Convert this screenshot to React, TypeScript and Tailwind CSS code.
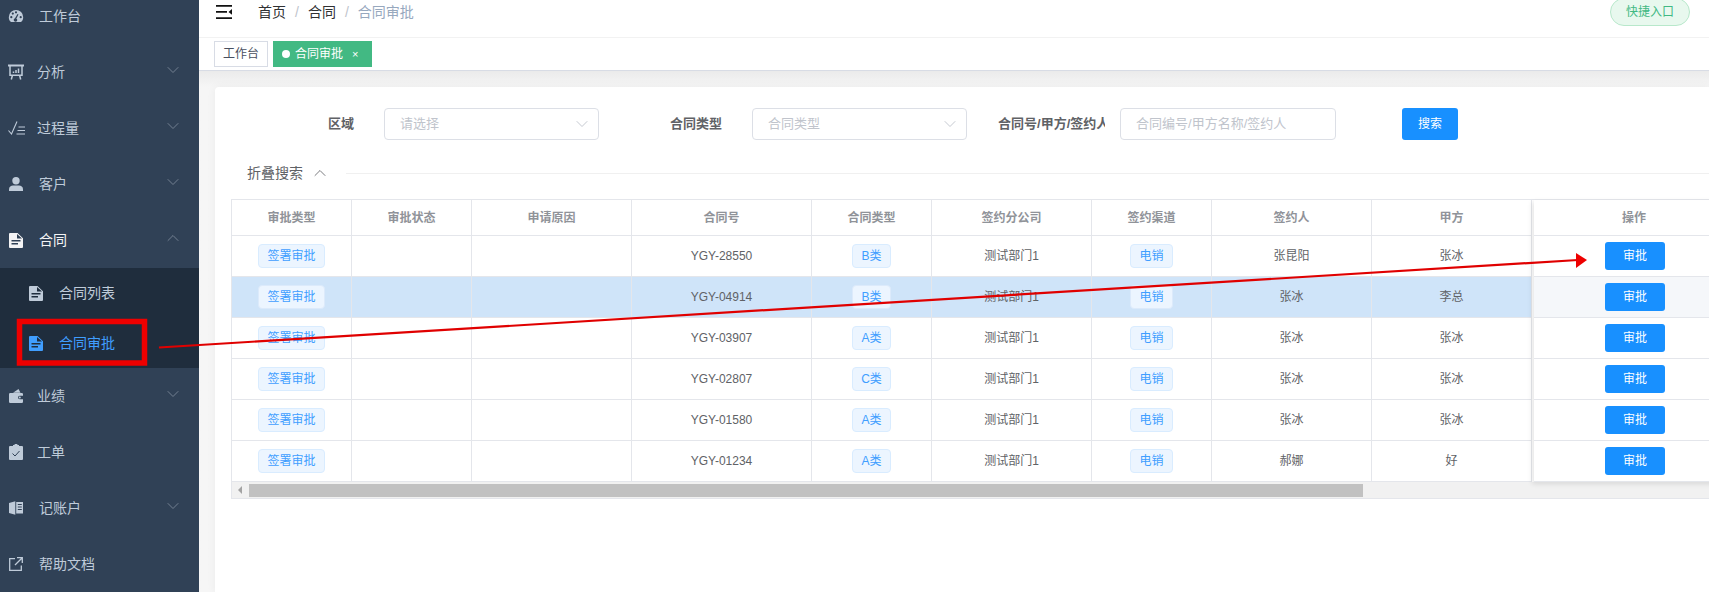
import React from 'react';
import { ChevronDown, ChevronUp } from 'lucide-react';

type IconProps = { className?: string };

const GaugeIcon = ({ className }: IconProps) => (
  <svg viewBox="0 0 16 14" className={className} fill="currentColor">
    <path fillRule="evenodd" d="M8 1a7.2 7.2 0 0 0-7.2 7.2c0 1.700.6 3.200 1.600 4.400a1 1 0 0 0 .8.400h9.600a1 1 0 0 0 .8-.400c1-1.200 1.600-2.700 1.600-4.400A7.200 7.200 0 0 0 8 1ZM3.300 9.300a1.100 1.100 0 1 1 0-2.200 1.100 1.100 0 0 1 0 2.200Zm1.500-3.600a1.100 1.100 0 1 1 0-2.200 1.100 1.100 0 0 1 0 2.200Zm3.200-1.300a1.100 1.100 0 1 1 0-2.200 1.100 1.100 0 0 1 0 2.200Zm1.300 6.600a1.800 1.800 0 1 1-2.300-1.800l2.500-4.300 1 .6-2.200 4.200c.6.200 1 .7 1 1.300Zm3.400-1.700a1.100 1.100 0 1 1 0-2.200 1.100 1.100 0 0 1 0 2.200Z" />
  </svg>
);

const BoardIcon = ({ className }: IconProps) => (
  <svg viewBox="0 0 16 16" className={className} fill="none" stroke="currentColor">
    <path strokeWidth="2" d="M0 1.500h16" />
    <path strokeWidth="1.500" d="M2 2v9.200h12V2M4.500 11l-1.200 4.500M11.500 11l1.200 4.500" />
    <path strokeWidth="1.500" d="M5.500 9V7.500M8 9V6M10.500 9V4.500" />
  </svg>
);

const CheckListIcon = ({ className }: IconProps) => (
  <svg viewBox="0 0 17 14" className={className} fill="none" stroke="currentColor" strokeWidth="1.100">
    <path d="M.5 9.500 3.500 13 9 .5M10.500 6h6.500M9.500 9.500H17M8.500 13H17" />
  </svg>
);

const UserIcon = ({ className }: IconProps) => (
  <svg viewBox="0 0 16 16" className={className} fill="currentColor">
    <circle cx="8" cy="4.700" r="3.700" />
    <path d="M1 15v-1.800C1 10.800 3 9.500 5 9.500h6c2 0 4 1.300 4 3.700V15Z" />
  </svg>
);

const FileIcon = ({ className }: IconProps) => (
  <svg viewBox="0 0 14 15" className={className} fill="currentColor">
    <path fillRule="evenodd" d="M1 0h7.500L14 5.200V14a1 1 0 0 1-1 1H1a1 1 0 0 1-1-1V1a1 1 0 0 1 1-1Zm1.500 7v1.500h9V7Zm0 3v1.500h6.500V10ZM8 1v4.500h5Z" />
  </svg>
);

const WalletIcon = ({ className }: IconProps) => (
  <svg viewBox="0 0 14 14" className={className} fill="currentColor">
    <path d="M4 3.800 9.500 0l2 3.800Z" />
    <path fillRule="evenodd" d="M0 5.200a1.200 1.200 0 0 1 1.200-1.200h11.600A1.200 1.200 0 0 1 14 5.200v1.600h-3.300a1.700 1.700 0 0 0 0 3.400H14v2.600a1.200 1.200 0 0 1-1.200 1.200H1.200A1.200 1.200 0 0 1 0 12.800Z" />
    <circle cx="10.800" cy="8.500" r="1" />
  </svg>
);

const ClipboardIcon = ({ className }: IconProps) => (
  <svg viewBox="0 0 14 16" className={className}>
    <path fill="currentColor" d="M1 2h3V1h1.500a1.500 1.500 0 0 1 3 0H10v1h3a1 1 0 0 1 1 1v12a1 1 0 0 1-1 1H1a1 1 0 0 1-1-1V3a1 1 0 0 1 1-1Z" />
    <path fill="none" stroke="#304156" strokeWidth="1" d="M3.500 9.500 6 12l4.500-5" />
  </svg>
);

const BookIcon = ({ className }: IconProps) => (
  <svg viewBox="0 0 14 14" className={className} fill="currentColor">
    <path d="M0 2 6.300.3v13.400L0 12Z" />
    <path fillRule="evenodd" d="M7.200 1H14v11.500H7.200Zm1.600 2v1h4V3Zm0 2.500v1h4v-1Zm0 2.500v1h4V8Z" />
  </svg>
);

const LinkIcon = ({ className }: IconProps) => (
  <svg viewBox="0 0 14 14" className={className} fill="none" stroke="currentColor" strokeWidth="1.300">
    <path d="M6 1.700H.7v11.600h11.600V8.500M8 .7h5.300V6M13.300.7 6 8" />
  </svg>
);

const menuTop = [
  { label: '工作台', icon: GaugeIcon, size: 'w-[16px] h-[14px]', gap: 'ml-[15px]' },
  { label: '分析', icon: BoardIcon, size: 'w-[16px] h-[16px]', gap: 'ml-[13px]', arrow: true },
  { label: '过程量', icon: CheckListIcon, size: 'w-[17px] h-[14px] shrink-0', gap: 'ml-[13px]', arrow: true },
  { label: '客户', icon: UserIcon, size: 'w-[16px] h-[16px]', gap: 'ml-[15px]', arrow: true },
];

const menuBottom = [
  { label: '业绩', icon: WalletIcon, size: 'w-[14px] h-[14px]', gap: 'ml-[13px]', arrow: true },
  { label: '工单', icon: ClipboardIcon, size: 'w-[14px] h-[16px]', gap: 'ml-[13px]' },
  { label: '记账户', icon: BookIcon, size: 'w-[14px] h-[14px]', gap: 'ml-[15px]', arrow: true },
  { label: '帮助文档', icon: LinkIcon, size: 'w-[14px] h-[14px]', gap: 'ml-[15px]' },
];

const rows = [
  { no: 'YGY-28550', kind: 'B类', signer: '张昆阳', party: '张冰' },
  { no: 'YGY-04914', kind: 'B类', signer: '张冰', party: '李总' },
  { no: 'YGY-03907', kind: 'A类', signer: '张冰', party: '张冰' },
  { no: 'YGY-02807', kind: 'C类', signer: '张冰', party: '张冰' },
  { no: 'YGY-01580', kind: 'A类', signer: '张冰', party: '张冰' },
  { no: 'YGY-01234', kind: 'A类', signer: '郝娜', party: '好' },
];

const headers = ['审批类型', '审批状态', '申请原因', '合同号', '合同类型', '签约分公司', '签约渠道', '签约人', '甲方'];

const colsClass = 'grid grid-cols-[120px_120px_160px_180px_120px_160px_120px_160px_160px]';
const cellClass = 'flex items-center justify-center border-r border-[#e4e6eb]';

function MenuItem({ item }: { item: (typeof menuTop)[number] }) {
  const Icon = item.icon;
  return (
    <div className="flex h-[56px] items-center pl-[8px] pr-[16px] text-sm text-[#bfcbd9]">
      <span className="flex w-[16px] justify-center">
        <Icon className={item.size} />
      </span>
      <span className={item.gap}>{item.label}</span>
      {item.arrow && <ChevronDown className="ml-auto h-[20px] w-[20px] -translate-y-0.5 text-[#7f8c9c]" strokeWidth={1} />}
    </div>
  );
}

function Tag({ text, hot }: { text: string; hot: boolean }) {
  return (
    <span className={`inline-flex h-[24px] items-center rounded-[4px] border bg-[#ecf5ff] px-[8px] text-xs text-[#409eff] ${hot ? 'border-[#dceafb]' : 'border-[#d9ecff]'}`}>
      {text}
    </span>
  );
}

function SelectBox({ placeholder }: { placeholder: string }) {
  return (
    <div className="flex h-[32px] w-[215px] items-center rounded-[4px] border border-[#dcdfe6] pl-[15px] pr-[6px] text-[13px] text-[#c0c4cc]">
      <span>{placeholder}</span>
      <ChevronDown className="ml-auto h-[20px] w-[20px] text-[#c0c4cc]" strokeWidth={1.100} />
    </div>
  );
}

export default function App() {
  return (
    <div className="relative flex h-[592px] w-[1709px] overflow-hidden bg-white [font-family:'Liberation_Sans','Noto_Sans_CJK_SC',sans-serif]">
      <aside className="flex w-[199px] shrink-0 flex-col bg-[#304156]">
        <div className="-mt-[12px]">
          {menuTop.map(m => <MenuItem key={m.label} item={m} />)}
          <div className="flex h-[56px] items-center pl-[8px] pr-[16px] text-sm text-[#f4f4f5]">
            <span className="flex w-[16px] justify-center"><FileIcon className="h-[15px] w-[14px]" /></span>
            <span className="ml-[15px]">合同</span>
            <ChevronUp className="ml-auto h-[20px] w-[20px] -translate-y-0.5 text-[#7f8c9c]" strokeWidth={1} />
          </div>
          <div className="bg-[#1f2d3d] text-sm">
            <div className="flex h-[50px] items-center pl-[29px] text-[#bfcbd9]">
              <FileIcon className="h-[15px] w-[14px]" />
              <span className="ml-[16px]">合同列表</span>
            </div>
            <div className="flex h-[50px] items-center pl-[29px] text-[#409eff]">
              <FileIcon className="h-[15px] w-[14px]" />
              <span className="ml-[16px]">合同审批</span>
            </div>
          </div>
          {menuBottom.map(m => <MenuItem key={m.label} item={m} />)}
        </div>
      </aside>

      <main className="flex min-w-0 flex-1 flex-col">
        <header className="flex h-[38px] shrink-0 items-center border-b border-[#f2f2f2] pb-[13px] pl-[17px] pr-[19px]">
          <svg viewBox="0 0 16 14" className="h-[14px] w-[16px] text-[#111]" fill="currentColor">
            <path d="M0 0h16v1.800H0ZM0 6h11v1.800H0ZM0 12.200h16V14H0ZM16 4v5.800l-3.500-2.900Z" />
          </svg>
          <nav className="ml-[26px] flex items-center text-sm">
            <span className="text-[#303133]">首页</span>
            <span className="mx-[9px] text-[#c0c4cc]">/</span>
            <span className="text-[#303133]">合同</span>
            <span className="mx-[9px] text-[#c0c4cc]">/</span>
            <span className="text-[#97a8be]">合同审批</span>
          </nav>
          <div className="ml-auto flex h-[28px] w-[80px] items-center justify-center rounded-full border border-[#b8e8cb] bg-[#e8f8ee] text-xs text-[#42b983]">
            快捷入口
          </div>
        </header>

        <div className="flex h-[33px] shrink-0 items-center gap-[5px] border-b border-[#d8dce5] pl-[15px]">
          <div className="flex h-[26px] w-[54px] items-center justify-center border border-[#d8dce5] text-xs text-[#495060]">工作台</div>
          <div className="flex h-[26px] w-[99px] items-center bg-[#42b983] pl-[9px] text-xs text-white">
            <span className="h-[8px] w-[8px] rounded-full bg-white" />
            <span className="ml-[5px]">合同审批</span>
            <span className="ml-[9px] text-[11px] leading-none">×</span>
          </div>
        </div>

        <div className="min-h-0 flex-1 bg-[#f5f5f5] bg-linear-to-b from-[#ebebeb] to-[#f6f6f6] to-[16px] pl-[16px] pt-[16px]">
          <section className="h-full rounded-tl-[4px] bg-white pl-[16px] pt-[21px] shadow-[0_0_10px_rgba(0,0,0,0.05)]">
            <div className="flex items-center text-[13px] text-[#606266]">
              <label className="ml-[97px] font-bold">区域</label>
              <div className="ml-[30px]"><SelectBox placeholder="请选择" /></div>
              <label className="ml-[71px] font-bold">合同类型</label>
              <div className="ml-[30px]"><SelectBox placeholder="合同类型" /></div>
              <label className="ml-[31px] w-[107px] overflow-hidden whitespace-nowrap font-bold">合同号/甲方/签约人</label>
              <div className="ml-[15px] flex h-[32px] w-[216px] items-center rounded-[4px] border border-[#dcdfe6] pl-[15px] text-[13px] text-[#c0c4cc]">合同编号/甲方名称/签约人</div>
              <button className="ml-[66px] h-[32px] w-[56px] rounded-[3px] bg-[#1890ff] text-xs text-white">搜索</button>
            </div>

            <div className="mt-[23px] flex h-[20px] items-center text-sm text-[#606266]">
              <span className="ml-[16px]">折叠搜索</span>
              <ChevronUp className="ml-[7px] h-[20px] w-[20px] text-[#606266]" strokeWidth={1} />
              <span className="ml-[16px] h-px flex-1 bg-[#f0f0f0]" />
            </div>

            <div className="relative mt-[16px] border-b border-[#e4e6eb] border-l text-xs text-[#606266]">
              <div className="flex border-t border-[#e4e6eb]">
                <div className="w-[1300px] shrink-0">
                  <div className={`${colsClass} h-[36px] border-b border-[#e4e6eb] font-bold text-[#909399]`}>
                    {headers.map(h => <div key={h} className={cellClass}>{h}</div>)}
                  </div>
                  {rows.map((r, i) => (
                    <div key={r.no} className={`${colsClass} h-[41px] border-b border-[#e4e6eb] ${i === 1 ? 'bg-[#cfe4f9]' : ''}`}>
                      <div className={cellClass}><Tag text="签署审批" hot={i === 1} /></div>
                      <div className={cellClass} />
                      <div className={cellClass} />
                      <div className={cellClass}>{r.no}</div>
                      <div className={cellClass}><Tag text={r.kind} hot={i === 1} /></div>
                      <div className={cellClass}>测试部门1</div>
                      <div className={cellClass}><Tag text="电销" hot={i === 1} /></div>
                      <div className={cellClass}>{r.signer}</div>
                      <div className={cellClass}>{r.party}</div>
                    </div>
                  ))}
                </div>
                <div className="ml-[2px] flex-1 shadow-[-2px_2px_5px_rgba(0,0,0,0.1)]">
                  <div className="flex h-[36px] w-[200px] items-center justify-center border-b border-[#e4e6eb] font-bold text-[#909399]">操作</div>
                  {rows.map((r, i) => (
                    <div key={r.no} className={`flex h-[41px] items-center border-b border-[#e4e6eb] pl-[71px] ${i === 1 ? 'bg-[#f5f7fa]' : ''}`}>
                      <button className="h-[28px] w-[60px] rounded-[3px] bg-[#1890ff] text-xs text-white">审批</button>
                    </div>
                  ))}
                </div>
              </div>
              <div className="flex h-[16px] items-center bg-[#f1f1f1]">
                <span className="ml-[6px] h-0 w-0 border-y-[4px] border-r-[4px] border-y-transparent border-r-[#a3a3a3]" />
                <span className="ml-[7px] h-[13px] w-[1114px] bg-[#c1c1c1]" />
              </div>
            </div>
          </section>
        </div>
      </main>

      {/* red annotation drawn over the screenshot */}
      <svg className="pointer-events-none absolute left-0 top-0 h-[592px] w-[1709px]" viewBox="0 0 1709 592" fill="none">
        <rect x="19.500" y="321.500" width="125" height="41.500" stroke="#ee0000" strokeWidth="5.500" />
        <line x1="159" y1="347.500" x2="1578" y2="260" stroke="#e00000" strokeWidth="2.200" />
        <polygon points="1576,253 1587,260 1576,268" fill="#ee0000" />
      </svg>
    </div>
  );
}
